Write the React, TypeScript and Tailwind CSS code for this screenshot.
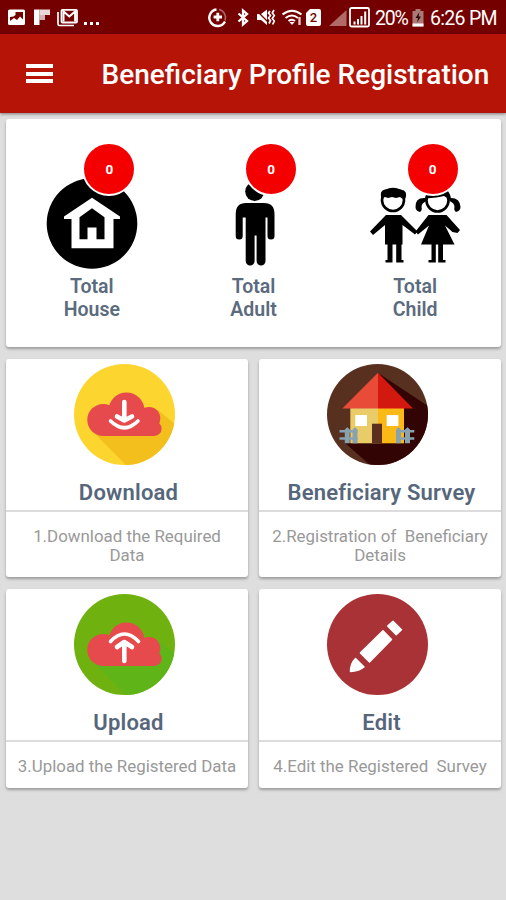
import React from "react";

interface StatProps {
  label: string[];
  count: number;
  children: React.ReactNode;
}

interface TileProps {
  title: string;
  description: string;
  children: React.ReactNode;
}

const StatusBar: React.FC = () => {
  return (
    <div className="flex h-[34px] items-center bg-[#750000] pl-2 pr-[9px] text-white">
      <svg className="h-[34px] w-[18px]" viewBox="8 0 18 34" fill="currentColor">
        <path
          fillRule="evenodd"
          d="M9.500 9.500h14a1.500 1.500 0 0 1 1.500 1.500v12.500a1.500 1.500 0 0 1-1.500 1.500h-14a1.500 1.500 0 0 1-1.500-1.500v-12.500a1.500 1.500 0 0 1 1.500-1.500zM10 17v4l4-3 3 2 3-3.500 3 3V12H15.500v3l-2 1.500z"
        />
      </svg>
      <svg className="ml-2 h-[34px] w-[16px]" viewBox="34 0 16 34" fill="currentColor">
        <path d="M34 9.500h5.500V25H34z" />
        <path d="M39.500 9.500H50V15H39.500z" opacity="0.85" />
        <path d="M39.500 15H45v5h-5.500z" opacity="0.7" />
      </svg>
      <svg className="ml-[7px] h-[34px] w-[22px]" viewBox="57 0 22 34" fill="none" stroke="currentColor">
        <path d="M58 12v12a1.500 1.500 0 0 0 1.500 1.500H74" strokeWidth="1.700" />
        <rect x="61.500" y="9.800" width="15.500" height="12.700" rx="1" strokeWidth="1.800" />
        <path d="M63.500 21.500V11.500l5.800 5 5.800-5v10" strokeWidth="2" />
      </svg>
      <svg className="ml-[5px] h-[34px] w-[16px]" viewBox="84 0 16 34" fill="currentColor">
        <path d="M84 22h3v3h-3zM90 22h3v3h-3zM96 22h3v3h-3z" />
      </svg>

      <div className="ml-auto flex items-center">
        <svg className="h-[34px] w-[20px]" viewBox="208 0 20 34" fill="none" stroke="currentColor">
          <path d="M216.500 9.500a8.300 8.300 0 1 0 8.500 12" strokeWidth="2.400" />
          <path d="M219 9.500a8.300 8.300 0 0 1 6 11" strokeWidth="1.600" opacity="0.4" />
          <path d="M217.800 12.800v8.400M213.600 17h8.400" strokeWidth="2.800" />
        </svg>
        <svg className="ml-[9px] h-[34px] w-[12px]" viewBox="237 0 12 34" fill="none" stroke="currentColor">
          <path d="M238.500 13.500l8.500 7.500-4 3.500v-14l4 3.500-8.500 7.500" strokeWidth="2.300" />
        </svg>
        <svg className="ml-[6px] h-[34px] w-[21px]" viewBox="255 0 21 34">
          <path d="M257 14h4l6-4.500v15.500l-6-5h-4z" fill="currentColor" />
          <path d="M256 10l14 14" stroke="#750000" strokeWidth="1.200" />
          <path
            d="M270 11l-1.500 2 2 2.500-2 2.500 2 2.500-1.500 3M274 10l-1.700 3 2 2.500-2 3 2 2.500-1.700 3.500"
            fill="none"
            stroke="currentColor"
            strokeWidth="1.700"
          />
        </svg>
        <svg className="ml-[6px] h-[34px] w-[21px]" viewBox="282 0 21 34" fill="none" stroke="currentColor">
          <path d="M282.500 14.500q9.500-7.500 19 0M285.500 18q6.500-5 12.500 0" strokeWidth="2" />
          <path d="M288.500 21q3.500-2.500 6.500 0" strokeWidth="2" />
          <path d="M292 25l-2.500-3h5z" fill="currentColor" stroke="none" />
          <path d="M299.500 17v8" strokeWidth="2.400" opacity="0.8" />
        </svg>
        <div className="ml-[3px] mt-px flex h-[17px] w-[15px] items-center justify-center rounded-[2px] bg-white font-[Roboto] text-[13px] font-medium text-[#750000] [clip-path:polygon(4px_0,100%_0,100%_100%,0_100%,0_4px)]">
          2
        </div>
        <svg className="ml-[8px] h-[34px] w-[41px]" viewBox="329 0 41 34">
          <path d="M329 26L346.500 10v16z" fill="#b06a68" />
          <rect x="350" y="8" width="19" height="18.500" rx="1.500" fill="none" stroke="currentColor" strokeWidth="1.800" />
          <path
            d="M354.500 24.500v-3M358 24.500v-5.500M361.500 24.500v-8.500M365.200 24.500v-13"
            stroke="currentColor"
            strokeWidth="2"
          />
        </svg>
        <span className="ml-[5px] w-[34px] whitespace-nowrap pt-[3px] font-[Roboto] text-[19.500px] tracking-[-1.200px]">
          20%
        </span>
        <svg className="ml-[3px] h-[34px] w-[12px]" viewBox="412 0 12 34">
          <path d="M415.500 9h5v2h3v15.500h-11V11h3z" fill="#a87a78" />
          <path d="M412.500 23.500h11v3h-11z" fill="#fff" />
          <path d="M419.500 12l-4 6h2.500l-1 4.500 4-6h-2.500z" fill="#2c0505" />
        </svg>
        <span className="ml-[6px] w-[67px] whitespace-nowrap pt-[3px] font-[Roboto] text-[19.500px] tracking-[-0.700px]">
          6:26 PM
        </span>
      </div>
    </div>
  );
};

const Stat: React.FC<StatProps> = ({ label, count, children }) => {
  return (
    <div className="flex flex-1 flex-col items-center">
      <div className="relative h-[92px] w-[92px]">
        {children}
        <span className="absolute -top-9 left-[36.500px] flex h-[54px] w-[54px] items-center justify-center rounded-full border-2 border-white bg-[#f50000] pt-px text-[13.500px] font-bold text-white">
          {count}
        </span>
      </div>
      <p className="mt-[5px] text-center text-[19.500px] font-semibold leading-[23px] text-[#5b6b7e]">
        {label[0]}
        <br />
        {label[1]}
      </p>
    </div>
  );
};

const Tile: React.FC<TileProps> = ({ title, description, children }) => {
  return (
    <div className="flex flex-col rounded-[3px] bg-white shadow-[0_2px_3px_rgba(0,0,0,0.300)]">
      <div className="flex flex-col items-center pt-[5px]">
        <div className="mr-[5px] h-[101px] w-[101px]">{children}</div>
        <h2 className="mt-[14px] h-[31px] whitespace-nowrap pl-[3px] text-[22px] font-semibold leading-[28px] tracking-[0.200px] text-[#56667b]">
          {title}
        </h2>
      </div>
      <div className="h-[2px] bg-[#dcdcdc]" />
      <p className="whitespace-pre pb-[11.500px] pt-[15px] text-center text-[16.900px] leading-[19.500px] text-[#999]">
        {description}
      </p>
    </div>
  );
};

const HouseIcon: React.FC = () => (
  <svg viewBox="0 0 92 92" className="h-full w-full">
    <circle cx="46" cy="45.500" r="45.300" fill="#000" />
    <path fill="#fff" d="M46 19.700L74 38.500v2.500h-6.500V70.300h-42V41H18V38.500z" />
    <path fill="#000" d="M46 30.300l12.500 9v22H50.500V49.500h-9v11.800h-8v-22z" />
  </svg>
);

const AdultIcon: React.FC = () => (
  <svg viewBox="0 0 92 92" className="h-full w-full">
    <circle cx="46.700" cy="13.500" r="9.500" />
    <path d="M38 25h18q10.500 0 10.500 11v22a3.500 3.500 0 0 1-7 0V39.500h-2V83a4.300 4.300 0 0 1-8.900 0V57.500h-2V83a4.300 4.300 0 0 1-8.900 0V39.500h-3V58a3.500 3.500 0 0 1-7 0V36q0-11 10.300-11z" />
  </svg>
);

const ChildIcon: React.FC = () => (
  <svg viewBox="0 0 92 92" className="h-full w-full">
    <circle cx="24" cy="22" r="11" fill="#fff" stroke="#000" strokeWidth="2.600" />
    <path d="M12.500 20.500q-2.500-8 3.500-9 8-2.500 16 0 7 1 4.500 9l-3.500 0-2-1.500-4 1-4-1-4 1-3-1z" />
    <path d="M17 37h15L48.500 53.500l-2.500 3L33.500 47v19.500h-1V82h2v2.500h-7.300v-18h-3.700v18h-7V82h2V66.500h-2.500V47L4 57 1 53.500z" />
    <circle cx="68.500" cy="22.500" r="11" fill="#fff" stroke="#000" strokeWidth="2.600" />
    <path d="M56 20.500Q58 9 69 9t13 11.500q-4 0-7-2.500-6 1.500-19 2.500z" />
    <path d="M57 20q-11-1-10.500 9 0 4 4.500 5 2.500-2 1.500-5 0-4 5-6zM80 20q11-1 11.500 9 0 4-4.500 5-2.500-2-1.500-5 0-4-5-6z" />
    <path d="M59.500 37h18L91 52l-2.500 3-5-1L76 47.500l9.500 19H74V82h2.500v2.500h-7.300v-18h-2.400v18h-7.300V82h3V66.500h-10.500l8-19L49 56.500l-2.500-3z" />
  </svg>
);

const Cloud: React.FC = () => (
  <g fill="#e64a4c">
    <circle cx="29.300" cy="55.900" r="16" />
    <circle cx="52.500" cy="46.500" r="18" />
    <circle cx="75" cy="54.300" r="11.300" />
    <circle cx="80.300" cy="64.700" r="7.300" />
    <path d="M29.300 48H80v24H29.300z" />
  </g>
);

const DownloadIcon: React.FC = () => (
  <svg viewBox="0 0 101 101" className="h-full w-full">
    <clipPath id="download-disc">
      <circle cx="50.500" cy="50.500" r="50.500" />
    </clipPath>
    <g clipPath="url(#download-disc)">
      <path fill="#fdd52f" d="M0 0h101v101H0z" />
      <path fill="#f2bf1d" d="M20 69l33 33h50V62L84 46z" />
    </g>
    <Cloud />
    <g fill="none" stroke="#fff" strokeLinecap="round" strokeLinejoin="round">
      <path d="M50.300 38v17M43 52.500l7.300 4 7.700-4" strokeWidth="4.600" />
      <path d="M36.500 57q14 13.500 27.500 0" strokeWidth="3.600" />
    </g>
  </svg>
);

const UploadIcon: React.FC = () => (
  <svg viewBox="0 0 101 101" className="h-full w-full">
    <clipPath id="upload-disc">
      <circle cx="50.500" cy="50.500" r="50.500" />
    </clipPath>
    <g clipPath="url(#upload-disc)">
      <path fill="#6fb20f" d="M0 0h101v101H0z" />
      <path fill="#5fb418" d="M20 69l33 33h50V62L84 46z" />
    </g>
    <Cloud />
    <g fill="none" stroke="#fff" strokeLinecap="round" strokeLinejoin="round">
      <path d="M50.300 49v18M43 53l7.300-5 7.700 5" strokeWidth="4.600" />
      <path d="M36.500 47.500q14-15 28 0" strokeWidth="3.600" />
    </g>
  </svg>
);

const SurveyIcon: React.FC = () => (
  <svg viewBox="0 0 101 101" className="h-full w-full">
    <clipPath id="survey-disc">
      <circle cx="50.500" cy="50.500" r="50.500" />
    </clipPath>
    <g clipPath="url(#survey-disc)">
      <path fill="#57301f" d="M0 0h101v101H0z" />
      <path fill="#320403" d="M51 9l50 33v59H43L18 79z" />
    </g>
    <path fill="#e9cb68" d="M23.300 44H51v35.300H23.300z" />
    <path fill="#fbb917" d="M51 44h26v35.300H51z" />
    <path fill="#e84c38" d="M51 8.700v35.800H15.300z" />
    <path fill="#d3180f" d="M51 8.700v35.800H86z" />
    <path fill="#fff" d="M28.300 51H40v11H28.300zM59.700 51h11.700v11H59.700z" />
    <path fill="#5c2f20" d="M45 59.700h10v19.600H45z" />
    {/* fence */}
    <g fill="#88a2b0">
      <path d="M12.500 66h18v2.600h-18zM12.500 73.200h18v2.600h-18zM69 66h18.300v2.600H69zM69 73.200h18.300v2.600H69z" />
      <path d="M17.800 79.300V65.500l2.500-2.200 2.500 2.200v13.800zM25.500 79.300V65.500l2.500-2.200 2.500 2.200v13.800zM69 79.300V65.500l2.500-2.200 2.500 2.200v13.800zM78 79.300V65.500l2.500-2.200 2.500 2.200v13.800z" />
    </g>
  </svg>
);

const EditIcon: React.FC = () => (
  <svg viewBox="0 0 101 101" className="h-full w-full">
    <circle cx="50.500" cy="50.500" r="50.500" fill="#a93236" />
    <g fill="#fff" stroke="#fff" strokeLinejoin="round" strokeWidth="1.500">
      <path d="M66 27.200l8.500 8.500-5.300 5-8.500-8.700z" />
      <path d="M56 36.700l8.500 8.700-22 22.500-9-9z" />
      <path d="M28.500 64.500l8.500 8.500q-6 4.500-13.500 4.500 0-8 5-13z" />
    </g>
  </svg>
);

const App: React.FC = () => {
  return (
    <div className="flex h-[900px] w-[506px] flex-col overflow-hidden bg-[#dedede] font-[Roboto,sans-serif]">
      <StatusBar />
      <header className="z-10 flex h-[79px] items-center bg-[#b61406] pl-[26px] text-white shadow-[0_1px_3px_rgba(0,0,0,0.450)]">
        <button aria-label="Menu" className="flex w-[27px] flex-col gap-[3.500px]">
          <span className="h-1 w-full bg-white" />
          <span className="h-1 w-full bg-white" />
          <span className="h-1 w-full bg-white" />
        </button>
        <h1 className="ml-[48.500px] whitespace-nowrap pt-[3px] text-[28px] font-medium">
          Beneficiary Profile Registration
        </h1>
      </header>

      <main className="flex flex-col gap-[11.500px] px-[5px] pl-[6px] pt-[6px]">
        <section className="flex h-[228px] rounded-[3px] bg-white px-[5px] pt-[59px] shadow-[0_2px_3px_rgba(0,0,0,0.300)]">
          <Stat label={["Total", "House"]} count={0}>
            <HouseIcon />
          </Stat>
          <Stat label={["Total", "Adult"]} count={0}>
            <AdultIcon />
          </Stat>
          <Stat label={["Total", "Child"]} count={0}>
            <ChildIcon />
          </Stat>
        </section>

        <section className="grid grid-cols-2 gap-x-[11px] gap-y-[12px]">
          <Tile title="Download" description={"1.Download the Required\nData"}>
            <DownloadIcon />
          </Tile>
          <Tile title="Beneficiary Survey" description={"2.Registration of  Beneficiary\nDetails"}>
            <SurveyIcon />
          </Tile>
          <Tile title="Upload" description="3.Upload the Registered Data">
            <UploadIcon />
          </Tile>
          <Tile title="Edit" description="4.Edit the Registered  Survey">
            <EditIcon />
          </Tile>
        </section>
      </main>
    </div>
  );
};

export default App;
